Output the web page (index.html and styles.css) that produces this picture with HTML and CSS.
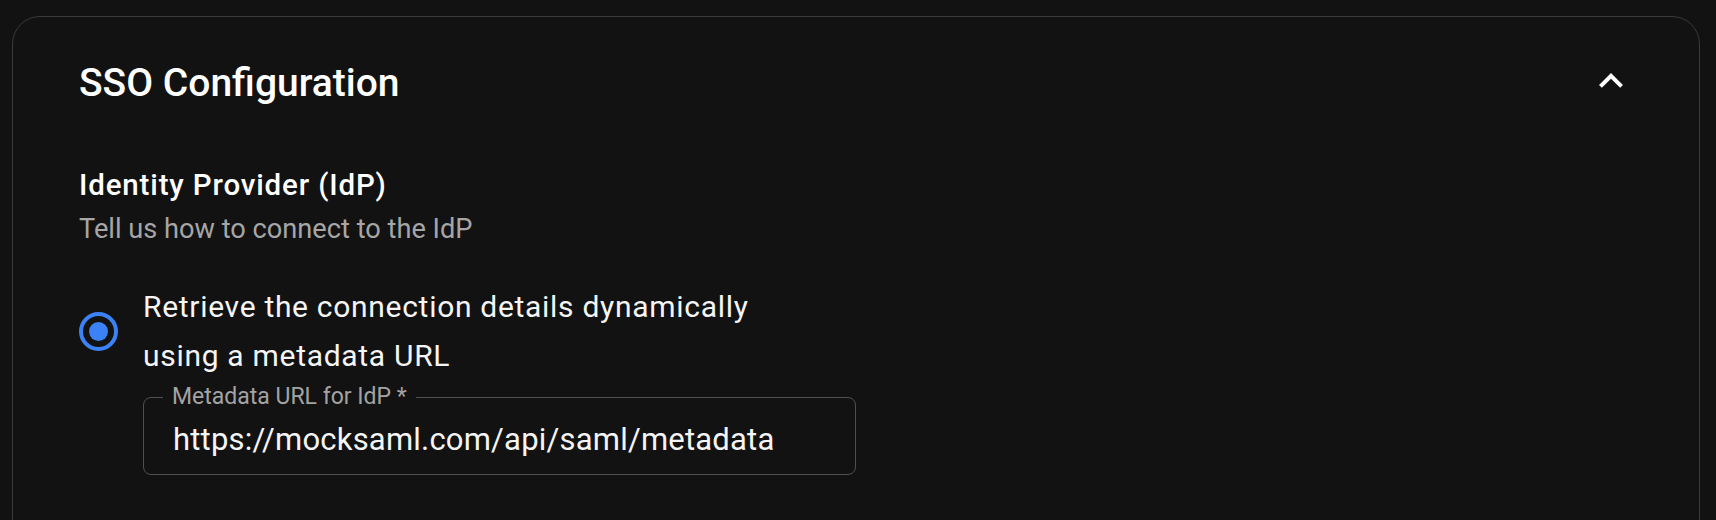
FILE: index.html
```html
<html>
    <head>
        <title>SSO Configuration</title>
        <link rel="stylesheet" href="styles.css">
    </head>
    <body>
        <div class="card">
            <div class="card-head">
                <h2 class="title">SSO Configuration</h2>
                <button class="toggle" type="button">
                    <svg viewBox="0 0 24 24" width="48" height="48"><path d="m12 8-6 6 1.41 1.41L12 10.83l4.59 4.58L18 14z" fill="currentColor"/></svg>
                </button>
            </div>
            <h3 class="section">Identity Provider (IdP)</h3>
            <p class="hint">Tell us how to connect to the IdP</p>
            <div class="option">
                <span class="radio checked"></span>
                <span class="option-label">Retrieve the connection details dynamically using a metadata URL</span>
            </div>
            <fieldset class="field">
                <legend>Metadata URL for IdP *</legend>
                <div class="value">https://mocksaml.com/api/saml/metadata</div>
            </fieldset>
        </div>
    </body>
</html>
```

FILE: styles.css
```css
body{
    margin: 16px 16px 0 12px;
    background: #121212;
    color: #f5f5f5;
    font-family: Roboto, "Liberation Sans", sans-serif;
    height: 504px;
    overflow: hidden;
}
.card{
    border: 1px solid #3a3a3a;
    border-radius: 28px;
    background: #121212;
    padding: 43px 64px 60px 66px;
    height: 600px;
}
.card-head{
    display: flex;
    align-items: center;
    justify-content: space-between;
}
.title{
    margin: 0;
    font-size: 39px;
    font-weight: 500;
    line-height: 46px;
    color: #fff;
}
.toggle{
    width: 48px;
    height: 48px;
    padding: 0;
    margin-top: -4px;
    border: none;
    background: none;
    color: #fff;
    display: flex;
}
.section{
    margin: 61px 0 0;
    font-size: 29.5px;
    font-weight: 500;
    letter-spacing: 0.85px;
    line-height: 36px;
    color: #fff;
}
.hint{
    margin: 9px 0 0;
    font-size: 27.2px;
    line-height: 34px;
    color: #a6a6a6;
}
.option{
    margin-top: 36px;
    display: flex;
    align-items: center;
    gap: 25px;
}
.radio{
    width: 39px;
    height: 39px;
    box-sizing: border-box;
    border: 4.5px solid #3b82f6;
    border-radius: 50%;
    display: grid;
    place-items: center;
    flex: none;
}
.radio.checked::after{
    content: "";
    width: 19px;
    height: 19px;
    border-radius: 50%;
    background: #3b82f6;
}
.option-label{
    max-width: 640px;
    font-size: 30px;
    letter-spacing: 0.7px;
    line-height: 49px;
    color: #f5f5f5;
}
.field{
    margin: 3px 0 0 64px;
    width: 713px;
    box-sizing: border-box;
    border: 1px solid #505050;
    border-radius: 8px;
    padding: 10px 29px 15px;
}
.field legend{
    margin-left: -10px;
    padding: 0 9px;
    font-size: 23px;
    line-height: 28px;
    color: #a3a3a3;
}
.value{
    font-size: 31px;
    letter-spacing: 0.2px;
    line-height: 38px;
    color: #f5f5f5;
}
```
